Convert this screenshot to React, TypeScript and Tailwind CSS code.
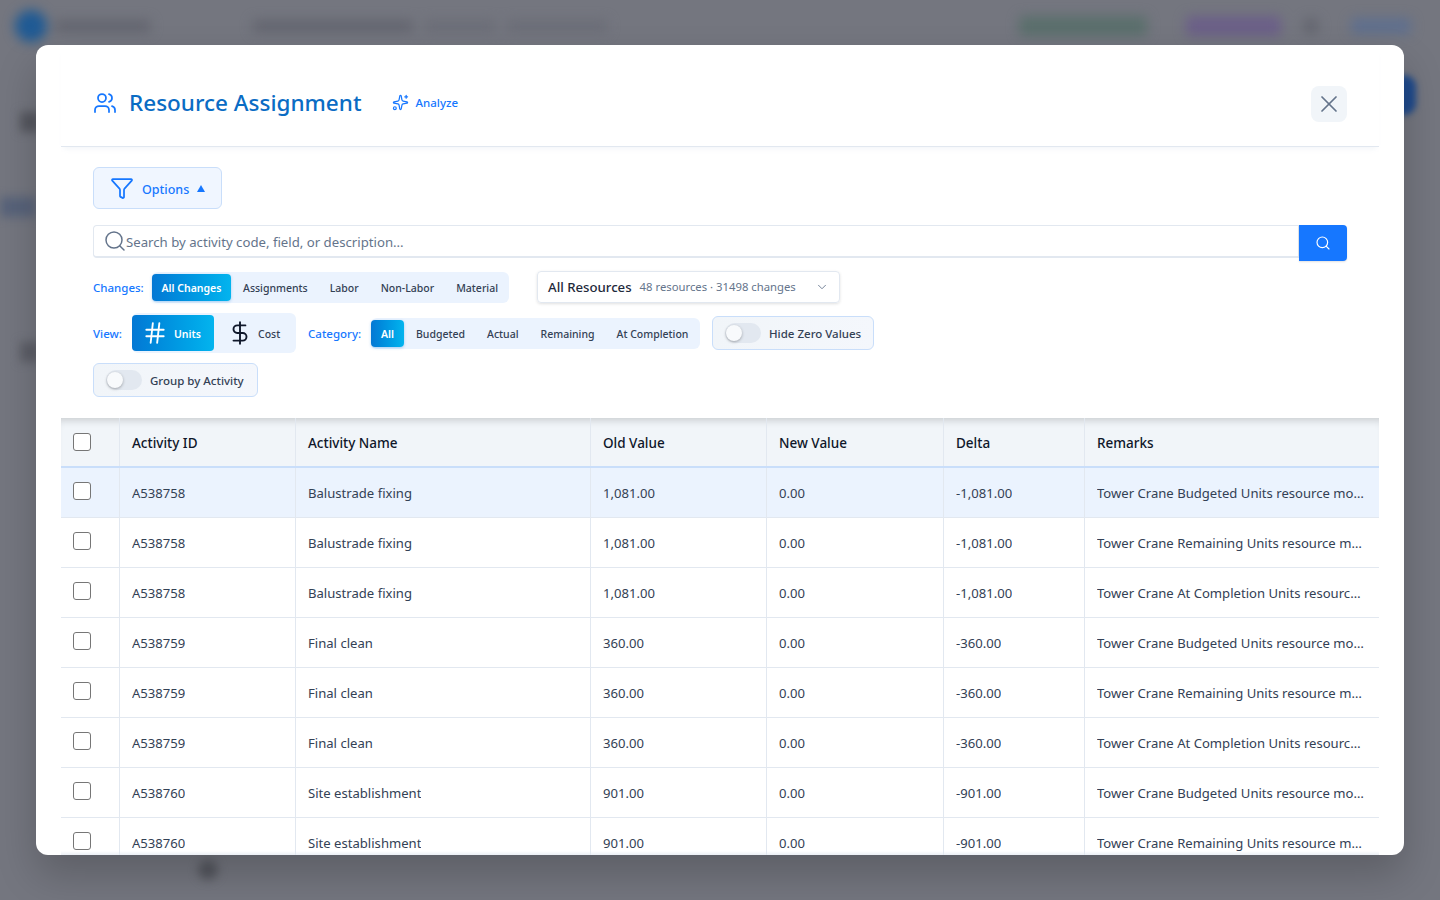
import { ChevronDown, DollarSign, Filter, Hash, Search, Sparkles, Users, X } from 'lucide-react';

const font = "font-['Noto_Sans',sans-serif]";

const rows = [
  ['A538758', 'Balustrade fixing', '1,081.00', '0.00', '-1,081.00', 'Tower Crane Budgeted Units resource modified from 1,081.00'],
  ['A538758', 'Balustrade fixing', '1,081.00', '0.00', '-1,081.00', 'Tower Crane Remaining Units resource modified from 1,081.00'],
  ['A538758', 'Balustrade fixing', '1,081.00', '0.00', '-1,081.00', 'Tower Crane At Completion Units resource modified from 1,081.00'],
  ['A538759', 'Final clean', '360.00', '0.00', '-360.00', 'Tower Crane Budgeted Units resource modified from 360.00'],
  ['A538759', 'Final clean', '360.00', '0.00', '-360.00', 'Tower Crane Remaining Units resource modified from 360.00'],
  ['A538759', 'Final clean', '360.00', '0.00', '-360.00', 'Tower Crane At Completion Units resource modified from 360.00'],
  ['A538760', 'Site establishment', '901.00', '0.00', '-901.00', 'Tower Crane Budgeted Units resource modified from 901.00'],
  ['A538760', 'Site establishment', '901.00', '0.00', '-901.00', 'Tower Crane Remaining Units resource modified from 901.00'],
];

const columns = ['Activity ID', 'Activity Name', 'Old Value', 'New Value', 'Delta', 'Remarks'];
const widths = ['w-[176px]', 'w-[295px]', 'w-[176px]', 'w-[177px]', 'w-[141px]', 'w-[294px] pr-[14px]'];

function Box() {
  return <span className="block h-[18px] w-[18px] rounded-[3px] border border-[#767676] bg-white" />;
}

function Toggle({ label, className }: { label: string; className: string }) {
  return (
    <div className={`flex h-[34px] items-center gap-2 rounded-md border border-[#c9defa] bg-gradient-to-r from-[#f1f5f9] to-[#f4f7fc] pl-[12px] pr-3 ${className}`}>
      <span className="relative h-5 w-9 shrink-0 rounded-full bg-[#e2e8f0]">
        <span className="absolute left-[1px] top-[2px] h-4 w-4 rounded-full bg-[#f8fafc] shadow-[0_1px_3px_rgba(0,0,0,0.3)]" />
      </span>
      <span className="whitespace-nowrap pt-[2px] text-[11.5px] font-medium text-[#334155]">{label}</span>
    </div>
  );
}

function Segment({ label, active, className = '' }: { label: string; active?: boolean; className?: string }) {
  return (
    <span
      className={`flex h-[27px] items-center whitespace-nowrap rounded-[4px] pt-[3px] text-[10.5px] font-medium ${
        active
          ? 'bg-gradient-to-r from-[#0478d4] to-[#04b4ee] font-semibold text-white shadow-[0_1px_3px_rgba(0,120,212,0.3)]'
          : 'text-[#334155]'
      } ${className}`}
    >
      {label}
    </span>
  );
}

export default function App() {
  return (
    <div className={`relative h-[900px] w-[1440px] overflow-hidden bg-[#74767f] ${font}`}>
      {/* blurred page behind the dialog */}
      <div className="flex h-[52px] items-center px-[15px] blur-[6px]">
        <span className="h-8 w-8 rounded-full bg-[#1f5a94]" />
        <span className="ml-[8px] h-3 w-[95px] bg-[#63656f]" />
        <span className="ml-[103px] h-3 w-[160px] bg-[#63656f]" />
        <span className="ml-3 h-3 w-[70px] bg-[#6b6d77]" />
        <span className="ml-3 h-3 w-[100px] bg-[#6b6d77]" />
        <span className="ml-[412px] h-5 w-[128px] rounded bg-[#5a6f6c]" />
        <span className="ml-[39px] h-5 w-[95px] rounded bg-[#6b5f88]" />
        <span className="ml-[22px] h-4 w-4 rounded-full bg-[#63656f]" />
        <span className="ml-[32px] h-4 w-[60px] rounded bg-[#5f6f8e]" />
      </div>
      <span className="absolute left-[20px] top-[112px] h-5 w-5 bg-[#55575f] blur-[5px]" />
      <span className="absolute left-[0px] top-[197px] h-5 w-[36px] bg-[#58637a] blur-[5px]" />
      <span className="absolute left-[20px] top-[342px] h-5 w-5 bg-[#5c5e67] blur-[5px]" />
      <span className="absolute left-[1392px] top-[75px] h-10 w-6 rounded-full bg-[#1f4a8c] blur-[3px]" />
      <span className="absolute left-[198px] top-[860px] h-5 w-5 rounded-full bg-[#55575f] blur-[5px]" />

      {/* dialog */}
      <div className="absolute left-[36px] top-[45px] flex h-[810px] w-[1368px] flex-col overflow-hidden rounded-xl bg-white px-[25px] shadow-[0_20px_40px_rgba(0,0,0,0.2)]">
        <header className="flex h-[102px] shrink-0 items-center justify-between border-b border-[#e2e8f0] px-[32px] pt-[16px] shadow-[0_5px_5px_-3px_rgba(226,232,240,0.4)]">
          <div className="-mt-[2px] flex items-center">
            <Users size={24} strokeWidth={1.75} className="text-[#1677ff]" />
            <h1 className="ml-[12px] text-[22.5px] font-medium leading-8 text-[#0a6cc4]">Resource Assignment</h1>
            <Sparkles size={17} strokeWidth={1.75} className="ml-[30px] text-[#1677ff]" />
            <span className="ml-[7px] text-[11.5px] font-medium text-[#1677ff]">Analyze</span>
          </div>
          <button className="flex h-9 w-9 items-center justify-center rounded-lg bg-[#f1f5f9]">
            <X size={28} strokeWidth={1.5} className="text-[#64748b]" />
          </button>
        </header>

        <section className="flex shrink-0 flex-col px-[32px]">
          <button className="mt-5 flex h-[42px] w-[129px] items-center rounded-md border border-[#c9defa] bg-[#f0f6ff] pl-[16px]">
            <Filter size={24} strokeWidth={1.75} className="text-[#1677ff]" />
            <span className="ml-[8px] mt-[4px] text-[12.5px] font-medium text-[#1677ff]">Options</span>
            <span className="ml-[8px] h-0 w-0 border-x-[4px] border-b-[7px] border-x-transparent border-b-[#1677ff]" />
          </button>

          <div className="mt-4 flex h-9 items-start">
            <div className="flex h-[33px] flex-1 items-center rounded-l-[4px] border border-b-2 border-[#e2e8f0] bg-white pl-[10px]">
              <Search size={24} strokeWidth={1.5} className="-ml-[1px] shrink-0 text-[#64748b]" />
              <span className="-ml-[1px] pt-[4px] text-[13.2px] text-[#64748b]">Search by activity code, field, or description...</span>
            </div>
            <button className="flex h-9 w-12 items-center justify-center rounded-r-[4px] bg-[#1677ff] shadow-[0_1px_2px_rgba(0,0,0,0.12)]">
              <Search size={16} strokeWidth={1.75} className="text-white" />
            </button>
          </div>

          <div className="mt-[10px] flex items-center">
            <span className="w-[59px] pt-[2px] text-[11.5px] font-medium text-[#1677ff]">Changes:</span>
            <div className="flex h-[31px] w-[357px] items-center rounded-md bg-[#ebf3fe]">
              <Segment label="All Changes" active className="w-[79px] justify-center" />
              <Segment label="Assignments" className="ml-[12px]" />
              <Segment label="Labor" className="ml-[22px]" />
              <Segment label="Non-Labor" className="ml-[22px]" />
              <Segment label="Material" className="ml-[22px]" />
            </div>
            <div className="ml-[28px] flex h-[32px] w-[303px] items-center rounded-[4px] border border-[#e2e8f0] pl-[10px] pr-[10px] shadow-[0_1px_3px_rgba(0,0,0,0.12)]">
              <span className="pt-[2px] text-[13.2px] font-medium text-[#1e293b]">All Resources</span>
              <span className="ml-2 text-[11.3px] text-[#64748b]">48 resources · 31498 changes</span>
              <ChevronDown size={14} strokeWidth={1.5} className="ml-auto text-[#64748b]" />
            </div>
          </div>

          <div className="mt-[10px] flex items-center">
            <span className="w-[39px] pt-[2px] text-[11.5px] font-medium text-[#1677ff]">View:</span>
            <div className="flex h-[40px] w-[164px] items-center rounded-md bg-[#ebf3fe]">
              <span className="flex h-9 w-[82px] items-center rounded-[4px] bg-gradient-to-r from-[#0478d4] to-[#04b4ee] pl-[10px] text-[10.5px] font-semibold text-white">
                <Hash size={26} strokeWidth={1.75} />
                <span className="ml-[6px] pt-[3px]">Units</span>
              </span>
              <DollarSign size={26} strokeWidth={1.75} className="ml-[13px] text-[#0f172a]" />
              <span className="ml-[5px] pt-[3px] text-[10.5px] font-medium text-[#334155]">Cost</span>
            </div>
            <span className="ml-[12px] w-[63px] pt-[2px] text-[11.5px] font-medium text-[#1677ff]">Category:</span>
            <div className="flex h-[31px] w-[329px] items-center rounded-md bg-[#ebf3fe]">
              <Segment label="All" active className="w-[33px] justify-center" />
              <Segment label="Budgeted" className="ml-[12px]" />
              <Segment label="Actual" className="ml-[22px]" />
              <Segment label="Remaining" className="ml-[22px]" />
              <Segment label="At Completion" className="ml-[22px]" />
            </div>
            <Toggle label="Hide Zero Values" className="ml-[12px] w-[162px]" />
          </div>

          <Toggle label="Group by Activity" className="mt-[10px] w-[165px]" />
        </section>

        <div className="mt-[21px] min-h-0 flex-1 overflow-hidden text-[13.1px] text-[#334155]">
          <div className="flex h-[50px] items-stretch border-b-2 border-[#c9defa] bg-[#f1f5f9] shadow-[inset_0_8px_8px_-6px_rgba(0,0,0,0.18)]">
            <div className="flex w-[59px] shrink-0 items-center border-r border-[#e2e8f0] pl-3">
              <Box />
            </div>
            {columns.map((c, i) => (
              <div
                key={c}
                className={`flex shrink-0 items-center px-3 pt-[2px] text-[13.5px] font-medium text-[#0f172a] ${widths[i]} ${i < 5 ? 'border-r border-[#e2e8f0]' : ''}`}
              >
                {c}
              </div>
            ))}
          </div>
          {rows.map((r, idx) => (
            <div key={idx} className={`flex h-[50px] items-stretch border-b border-[#e2e8f0] ${idx === 0 ? 'bg-[#ebf3fe]' : 'bg-white'}`}>
              <div className="flex w-[59px] shrink-0 items-center border-r border-[#e2e8f0] pb-[3px] pl-3">
                <Box />
              </div>
              {r.map((v, i) => (
                <div
                  key={i}
                  className={`flex shrink-0 items-center px-3 pt-[2px] ${widths[i]} ${i < 5 ? 'border-r border-[#e2e8f0]' : ''}`}
                >
                  <span className="truncate">{v}</span>
                </div>
              ))}
            </div>
          ))}
        </div>
        <div className="absolute inset-x-[25px] bottom-0 h-[4px] bg-gradient-to-b from-transparent to-[#e2e8f0]/70" />
      </div>
    </div>
  );
}
